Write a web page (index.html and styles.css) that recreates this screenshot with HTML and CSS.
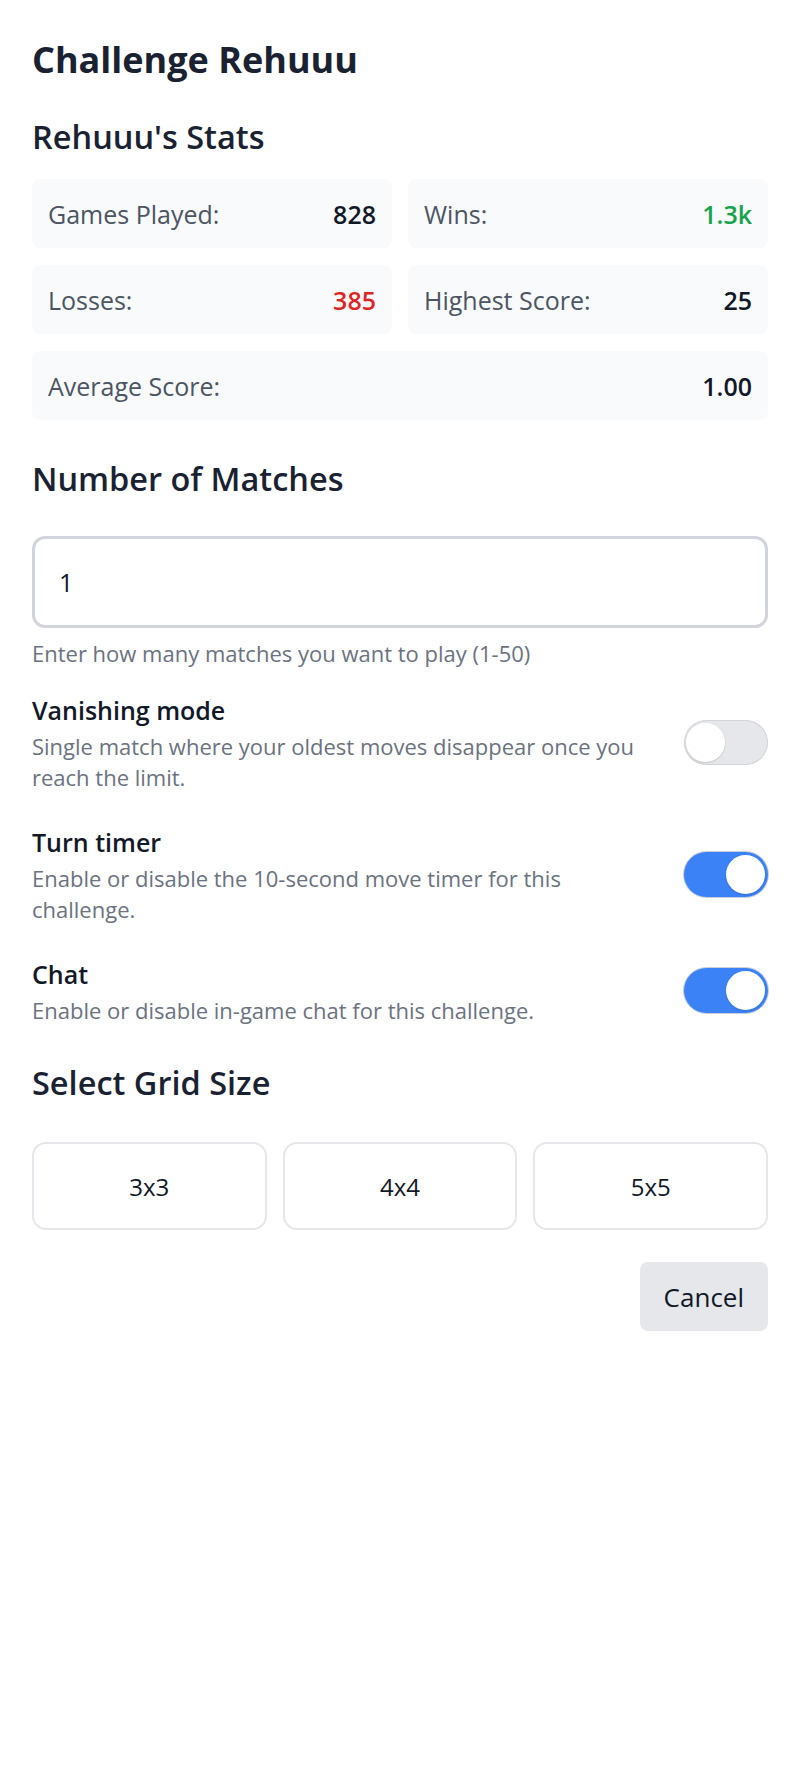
FILE: index.html
```html
<!DOCTYPE html>
<html lang="en">
<head>
<meta charset="utf-8">
<title>Challenge Rehuuu</title>
<link rel="stylesheet" href="styles.css">
</head>
<body>
<main class="page">
  <h1 class="title">Challenge Rehuuu</h1>

  <h2 class="section stats-title">Rehuuu's Stats</h2>
  <div class="stats">
    <div class="stat"><span class="label">Games Played:</span><span class="value">828</span></div>
    <div class="stat"><span class="label">Wins:</span><span class="value win">1.3k</span></div>
    <div class="stat"><span class="label">Losses:</span><span class="value loss">385</span></div>
    <div class="stat"><span class="label">Highest Score:</span><span class="value">25</span></div>
    <div class="stat wide"><span class="label">Average Score:</span><span class="value">1.00</span></div>
  </div>

  <h2 class="section matches-title">Number of Matches</h2>
  <input class="matches" type="text" value="1">
  <p class="help">Enter how many matches you want to play (1-50)</p>

  <div class="option first">
    <div class="option-text">
      <div class="option-title">Vanishing mode</div>
      <div class="option-desc">Single match where your oldest moves disappear once you reach the limit.</div>
    </div>
    <span class="toggle"><span class="knob"></span></span>
  </div>

  <div class="option">
    <div class="option-text">
      <div class="option-title">Turn timer</div>
      <div class="option-desc">Enable or disable the 10-second move timer for this challenge.</div>
    </div>
    <span class="toggle on"><span class="knob"></span></span>
  </div>

  <div class="option">
    <div class="option-text">
      <div class="option-title">Chat</div>
      <div class="option-desc">Enable or disable in-game chat for this challenge.</div>
    </div>
    <span class="toggle on"><span class="knob"></span></span>
  </div>

  <h2 class="section grid-title">Select Grid Size</h2>
  <div class="grid-sizes">
    <button class="size">3x3</button>
    <button class="size">4x4</button>
    <button class="size">5x5</button>
  </div>

  <div class="actions">
    <button class="cancel">Cancel</button>
  </div>
</main>
</body>
</html>
```

FILE: styles.css
```css
* { box-sizing: border-box; }

html, body {
  margin: 0;
  background: #ffffff;
}

body {
  font-family: "Open Sans", "Noto Sans", sans-serif;
  color: #111827;
}

.page {
  padding: 38px 32px 40px;
}

.title {
  margin: 0;
  font-size: 36px;
  line-height: 44px;
  font-weight: 700;
  color: #1a2232;
}

.section {
  margin: 0;
  font-size: 32.5px;
  line-height: 40px;
  font-weight: 600;
  color: #1a2232;
}

.stats-title { margin-top: 35px; }
.matches-title { margin-top: 39px; }
.grid-title { margin-top: 37px; }

.stats {
  margin-top: 22px;
  display: grid;
  grid-template-columns: 1fr 1fr;
  column-gap: 16px;
  row-gap: 17px;
}

.stat {
  height: 69px;
  padding: 0 16px;
  background: #f9fafb;
  border-radius: 8px;
  display: flex;
  align-items: center;
  justify-content: space-between;
  font-size: 25px;
  line-height: 36px;
}

.stat.wide { grid-column: 1 / span 2; }

.label { color: #4b5563; }

.value {
  font-weight: 600;
  color: #111827;
}

.value.win { color: #16a34a; }
.value.loss { color: #dc2626; }

.matches {
  display: block;
  width: 100%;
  height: 92px;
  margin-top: 37px;
  padding: 0 24px;
  border: 3px solid #d1d5db;
  border-radius: 13px;
  font-family: inherit;
  font-size: 25px;
  color: #111827;
  background: #ffffff;
  outline: none;
}

.help {
  margin: 10px 0 0;
  font-size: 22px;
  line-height: 31px;
  color: #6b7280;
}

.option {
  display: flex;
  align-items: center;
  gap: 36px;
  margin-top: 30px;
}

.option.first { margin-top: 22px; }

.option-text {
  flex: 1;
  min-width: 0;
}

.option-title {
  font-size: 25px;
  line-height: 38px;
  font-weight: 600;
  color: #111827;
}

.option-desc {
  margin-top: 2px;
  font-size: 22px;
  line-height: 31px;
  color: #6b7280;
}

.toggle {
  position: relative;
  flex: none;
  width: 84px;
  height: 45px;
  border-radius: 999px;
  background: #e5e7eb;
  box-shadow: inset 0 0 0 1px #d1d5db;
}

.toggle .knob {
  position: absolute;
  top: 3px;
  left: 2px;
  width: 39px;
  height: 39px;
  border-radius: 50%;
  background: #ffffff;
  box-shadow: 0 1px 2px rgba(0, 0, 0, 0.15), 0 0 0 1px #e5e7eb;
}

.toggle.on {
  background: #3b82f6;
  box-shadow: 0 0 0 1px rgba(100, 116, 139, 0.35);
}

.toggle.on .knob {
  left: auto;
  right: 3px;
  box-shadow: 0 1px 2px rgba(0, 0, 0, 0.15);
}

.grid-sizes {
  margin-top: 39px;
  display: grid;
  grid-template-columns: repeat(3, 1fr);
  gap: 16px;
}

.size {
  height: 88px;
  border: 2px solid #e5e7eb;
  border-radius: 14px;
  background: #ffffff;
  font-family: inherit;
  font-size: 24px;
  color: #111827;
  cursor: pointer;
}

.actions {
  margin-top: 32px;
  display: flex;
  justify-content: flex-end;
}

.cancel {
  height: 69px;
  padding: 0 24px;
  border: none;
  border-radius: 8px;
  background: #e5e7eb;
  font-family: inherit;
  font-size: 26px;
  color: #111827;
  cursor: pointer;
}
```
